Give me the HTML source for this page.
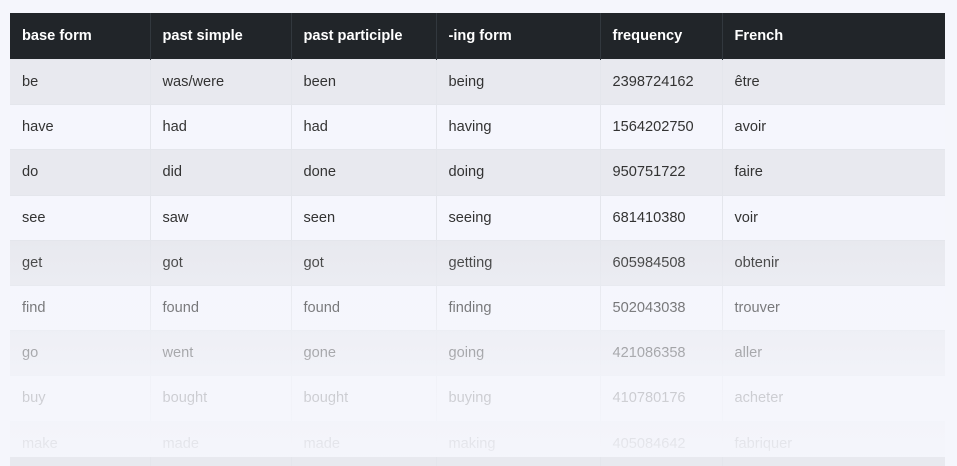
<!DOCTYPE html>
<html><head><style>
body{margin:0;width:957px;height:457px;overflow:hidden;background:#f5f6fc;font-family:"Liberation Sans",sans-serif;position:relative}
table{position:absolute;left:10px;top:13px;width:935px;border-collapse:collapse;font-size:14.6px}
th{background:#212529;color:#fff;font-weight:bold;text-align:left;height:46px;padding:0 0 0 12px;border-left:1px solid #32383e}
td{height:44.2px;padding:0 0 0 12px;color:#333;border-left:1px solid #e4e6ec;border-top:1px solid #e4e6ec}
th:first-child,td:first-child{border-left:none}
tr:nth-child(odd) td{background:#e8e9ef}
tr:nth-child(even) td{background:#f5f6fd}
col.a{width:140px}col.b{width:141px}col.c{width:145px}col.d{width:164px}col.e{width:122px}
.fade{position:absolute;left:0;right:0;top:240px;bottom:0;background:linear-gradient(rgba(245,246,252,0),rgba(245,246,252,0.35) 30%,rgba(245,246,252,0.75) 65%,rgba(245,246,252,0.95))}
</style></head><body>
<table><colgroup><col class="a"><col class="b"><col class="c"><col class="d"><col class="e"><col></colgroup>
<thead><tr><th>base form</th><th>past simple</th><th>past participle</th><th>-ing form</th><th>frequency</th><th>French</th></tr></thead>
<tbody>
<tr><td>be</td><td>was/were</td><td>been</td><td>being</td><td>2398724162</td><td>être</td></tr>
<tr><td>have</td><td>had</td><td>had</td><td>having</td><td>1564202750</td><td>avoir</td></tr>
<tr><td>do</td><td>did</td><td>done</td><td>doing</td><td>950751722</td><td>faire</td></tr>
<tr><td>see</td><td>saw</td><td>seen</td><td>seeing</td><td>681410380</td><td>voir</td></tr>
<tr><td>get</td><td>got</td><td>got</td><td>getting</td><td>605984508</td><td>obtenir</td></tr>
<tr><td>find</td><td>found</td><td>found</td><td>finding</td><td>502043038</td><td>trouver</td></tr>
<tr><td>go</td><td>went</td><td>gone</td><td>going</td><td>421086358</td><td>aller</td></tr>
<tr><td>buy</td><td>bought</td><td>bought</td><td>buying</td><td>410780176</td><td>acheter</td></tr>
<tr><td>make</td><td>made</td><td>made</td><td>making</td><td>405084642</td><td>fabriquer</td></tr>
</tbody></table>
<div class="fade"></div>
</body></html>
